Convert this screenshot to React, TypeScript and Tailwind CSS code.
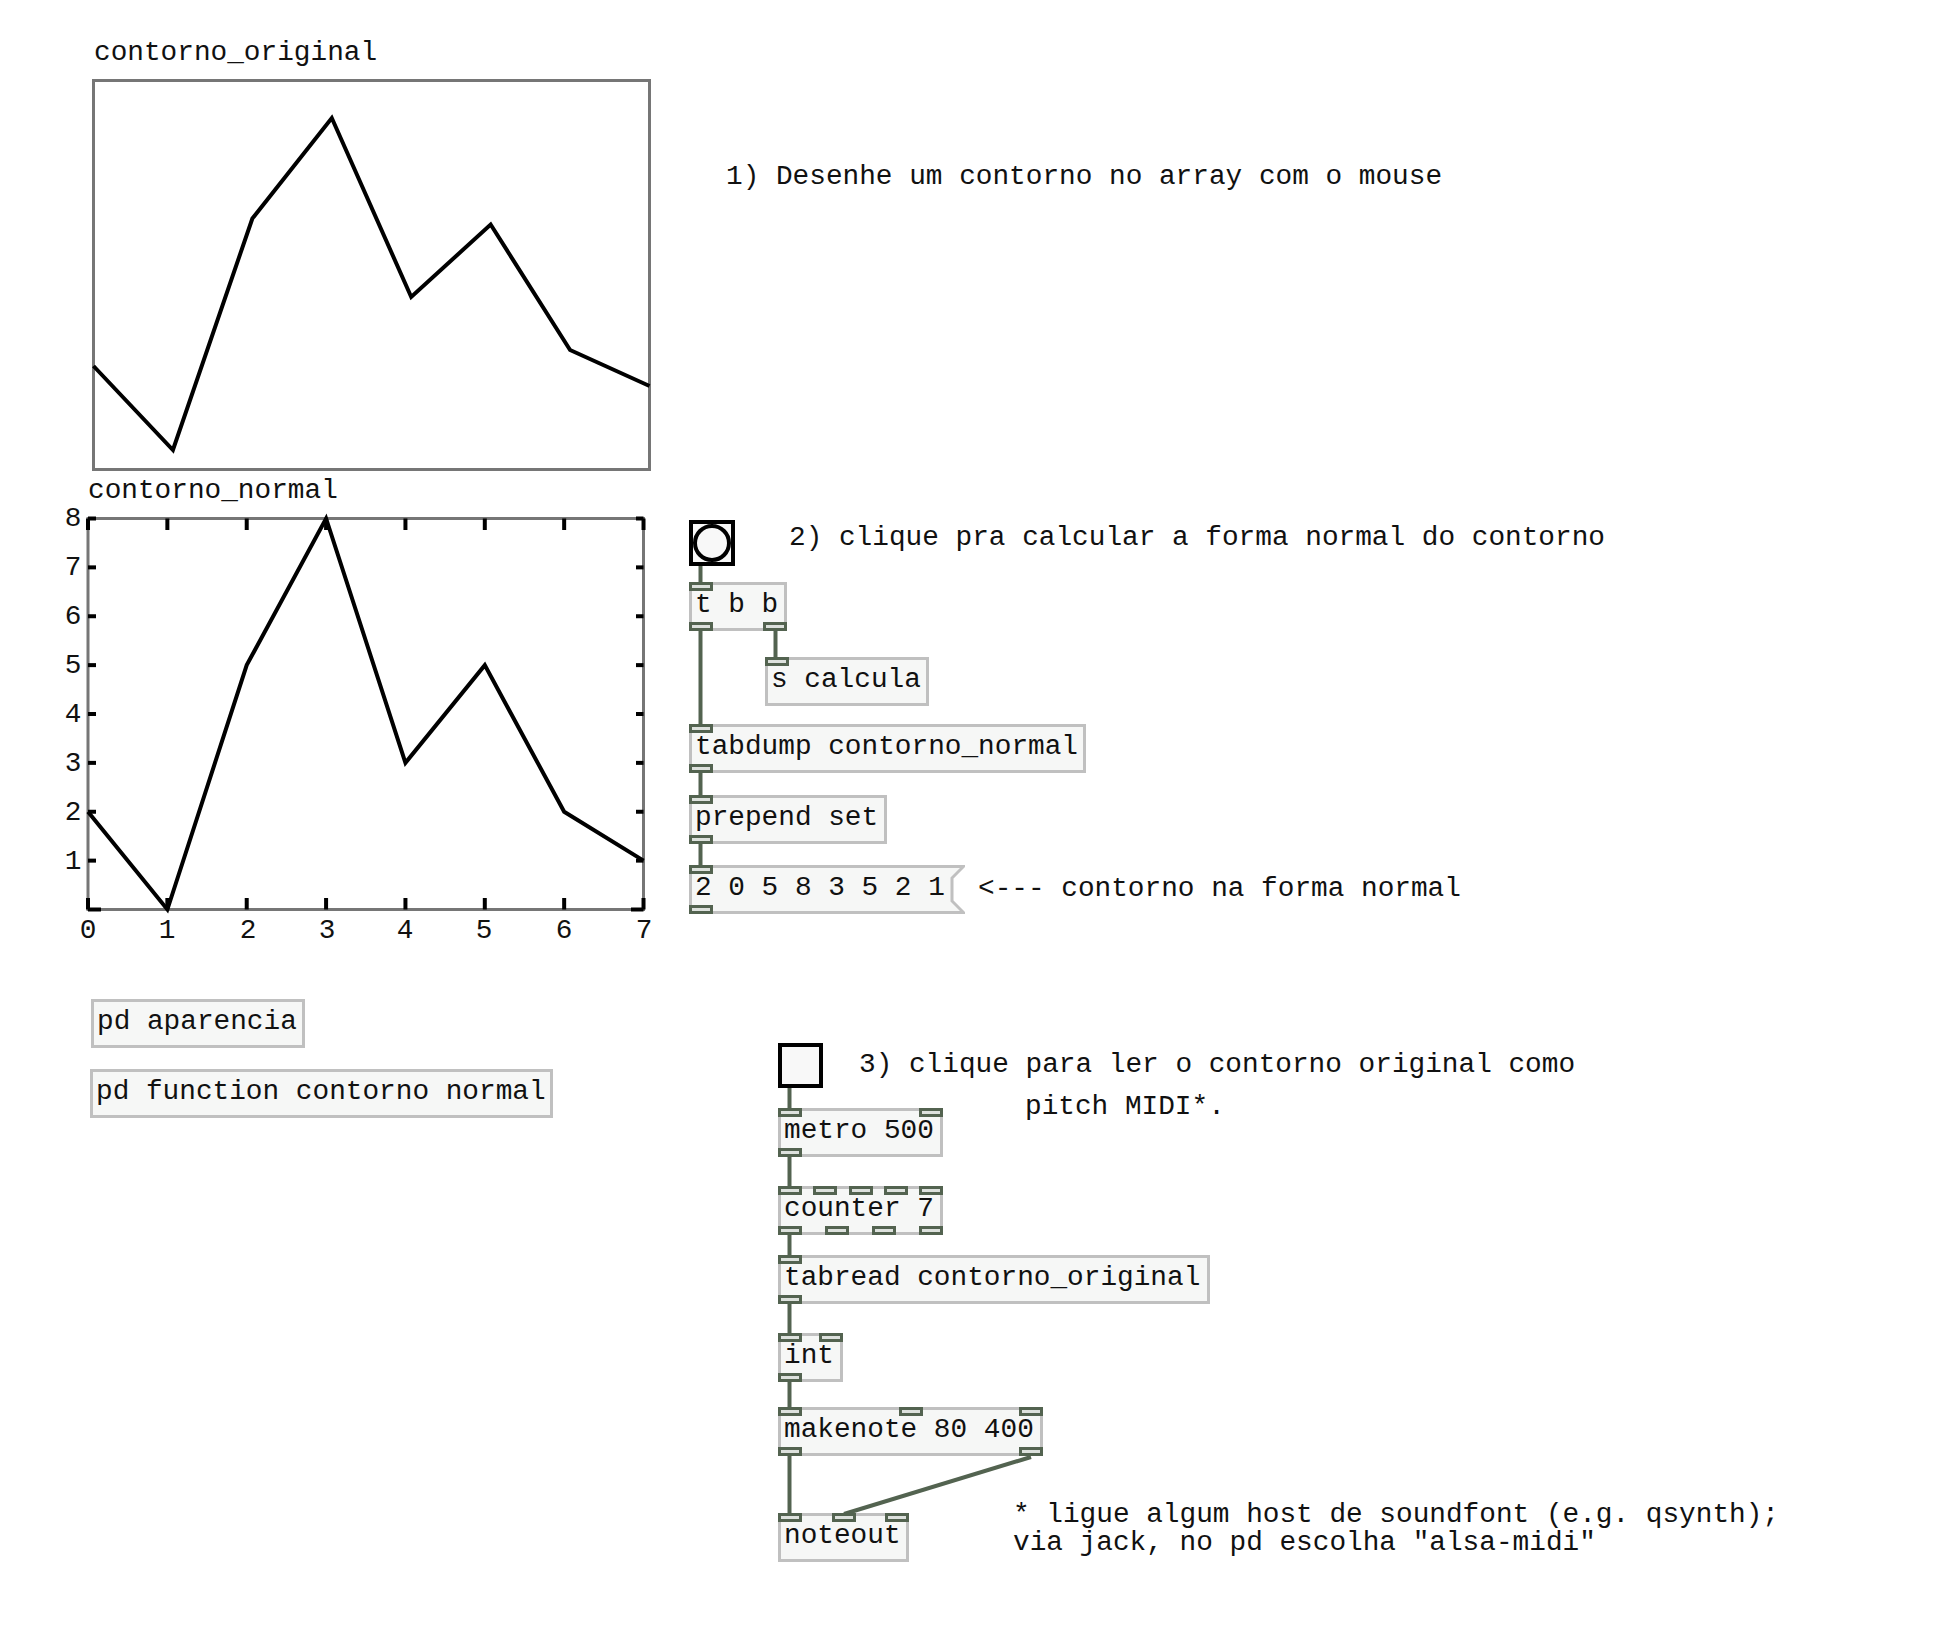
import React from "react";

const WIRE = "#536350";

type Obj = {
  text: string;
  cls: string;
  ins: number;
  outs: number;
};

// nodes of the pd patch, placed on the canvas
const objects: Obj[] = [
  { text: "t b b", cls: "left-[689px] top-[582px] w-[98px]", ins: 1, outs: 2 },
  { text: "s calcula", cls: "left-[765px] top-[657px] w-[164px]", ins: 1, outs: 0 },
  { text: "tabdump contorno_normal", cls: "left-[689px] top-[724px] w-[397px]", ins: 1, outs: 1 },
  { text: "prepend set", cls: "left-[689px] top-[795px] w-[198px]", ins: 1, outs: 1 },
  { text: "pd aparencia", cls: "left-[91px] top-[999px] w-[214px]", ins: 0, outs: 0 },
  { text: "pd function contorno normal", cls: "left-[90px] top-[1069px] w-[463px]", ins: 0, outs: 0 },
  { text: "metro 500", cls: "left-[778px] top-[1108px] w-[165px]", ins: 2, outs: 1 },
  { text: "counter 7", cls: "left-[778px] top-[1186px] w-[165px]", ins: 5, outs: 4 },
  { text: "tabread contorno_original", cls: "left-[778px] top-[1255px] w-[432px]", ins: 1, outs: 1 },
  { text: "int", cls: "left-[778px] top-[1333px] w-[65px]", ins: 2, outs: 1 },
  { text: "makenote 80 400", cls: "left-[778px] top-[1407px] w-[265px]", ins: 3, outs: 2 },
  { text: "noteout", cls: "left-[778px] top-[1513px] w-[131px]", ins: 3, outs: 0 },
];

const wires: [number, number, number, number][] = [
  [700.5, 566, 700.5, 582],
  [700.5, 631, 700.5, 724],
  [775.5, 631, 775.5, 657],
  [700.5, 773, 700.5, 795],
  [700.5, 844, 700.5, 865],
  [789.5, 1088, 789.5, 1108],
  [789.5, 1157, 789.5, 1186],
  [789.5, 1235, 789.5, 1255],
  [789.5, 1304, 789.5, 1333],
  [789.5, 1382, 789.5, 1407],
  [789.5, 1456, 789.5, 1513],
  [1031, 1457, 844, 1514],
];

const original = [366, 450, 218.5, 118, 297, 224.5, 350, 386];
const normal = [2, 0, 5, 8, 3, 5, 2, 1];

const g1x = (i: number) => 93.5 + i * 79.43;
const g2x = (i: number) => 88 + i * 79.36;
const g2y = (v: number) => 909.5 - v * 48.875;

const Port = () => (
  <div className="h-[9px] w-[24px] border-[3px] border-[#536350] bg-[#dde1dd]" />
);

const Ports = ({ n, bottom }: { n: number; bottom?: boolean }) => {
  if (n === 0) return null;
  return (
    <div
      className={`absolute left-[-3px] right-[-3px] flex justify-between ${
        bottom ? "bottom-[-3px]" : "top-[-3px]"
      }`}
    >
      {Array.from({ length: n }).map((_, i) => (
        <Port key={i} />
      ))}
    </div>
  );
};

const Box = ({ o }: { o: Obj }) => (
  <div
    className={`absolute h-[49px] border-[3px] border-[#c0c0c0] bg-[#f6f7f6] ${o.cls}`}
  >
    <Ports n={o.ins} />
    <Ports n={o.outs} bottom />
    <span className="block whitespace-pre pl-[3px] pt-[5.5px] leading-[27.5px]">
      {o.text}
    </span>
  </div>
);

const Message = () => (
  <div className="absolute left-[689px] top-[865px] h-[49px] w-[276px]">
    <svg className="absolute inset-0" width="276" height="49">
      <polygon
        points="1.5,1.5 274.5,1.5 263,13 263,36 274.5,47.5 1.5,47.5"
        fill="#f6f7f6"
        stroke="#c0c0c0"
        strokeWidth="3"
      />
    </svg>
    <div className="absolute left-0 top-0">
      <Port />
    </div>
    <div className="absolute bottom-0 left-0">
      <Port />
    </div>
    <span className="relative block whitespace-pre pl-[6px] pt-[8.5px] leading-[27.5px]">
      2 0 5 8 3 5 2 1
    </span>
  </div>
);

const Comment = ({ cls, children }: { cls: string; children: React.ReactNode }) => (
  <span className={`absolute whitespace-pre leading-[27.5px] ${cls}`}>{children}</span>
);

const yLabels = [
  { v: 8, cls: "top-[505px]" },
  { v: 7, cls: "top-[554px]" },
  { v: 6, cls: "top-[603px]" },
  { v: 5, cls: "top-[652px]" },
  { v: 4, cls: "top-[701px]" },
  { v: 3, cls: "top-[750px]" },
  { v: 2, cls: "top-[799px]" },
  { v: 1, cls: "top-[848px]" },
];

const xLabels = [
  { v: 0, cls: "left-[73px]" },
  { v: 1, cls: "left-[152px]" },
  { v: 2, cls: "left-[233px]" },
  { v: 3, cls: "left-[312px]" },
  { v: 4, cls: "left-[390px]" },
  { v: 5, cls: "left-[469px]" },
  { v: 6, cls: "left-[549px]" },
  { v: 7, cls: "left-[629px]" },
];

export default function App() {
  return (
    <div className="relative h-[1628px] w-[1958px] overflow-hidden bg-white font-['Liberation_Mono',monospace] text-[27.75px] text-[#111]">
      <svg className="absolute left-0 top-0" width="1958" height="1628">
        {/* contorno_original */}
        <rect x="93.5" y="80.5" width="556" height="389" fill="#fff" stroke="#767676" strokeWidth="3" />
        <polyline
          points={original.map((y, i) => `${g1x(i)},${y}`).join(" ")}
          fill="none"
          stroke="#000"
          strokeWidth="4"
        />

        {/* contorno_normal */}
        <rect x="88" y="518.5" width="555.5" height="391" fill="#fff" stroke="#767676" strokeWidth="3" />
        {normal.map((_, i) => (
          <g key={"t" + i} stroke="#000" strokeWidth="4">
            <line x1={g2x(i)} y1={518.5} x2={g2x(i)} y2={530} />
            <line x1={g2x(i)} y1={909.5} x2={g2x(i)} y2={898} />
          </g>
        ))}
        {[0, 1, 2, 3, 4, 5, 6, 7, 8].map((v) => (
          <g key={"v" + v} stroke="#000" strokeWidth="4">
            <line x1={88} y1={g2y(v)} x2={v === 0 ? 101 : 96} y2={g2y(v)} />
            <line x1={643.5} y1={g2y(v)} x2={v === 0 ? 631 : 636} y2={g2y(v)} />
          </g>
        ))}
        <polyline
          points={normal.map((v, i) => `${g2x(i)},${g2y(v)}`).join(" ")}
          fill="none"
          stroke="#000"
          strokeWidth="4"
        />

        {/* patch cords */}
        {wires.map(([x1, y1, x2, y2], i) => (
          <line key={"w" + i} x1={x1} y1={y1} x2={x2} y2={y2} stroke={WIRE} strokeWidth="4" />
        ))}
      </svg>

      <Comment cls="left-[94px] top-[38.5px]">contorno_original</Comment>
      <Comment cls="left-[88px] top-[476.5px]">contorno_normal</Comment>

      {yLabels.map((l) => (
        <span key={l.v} className={`absolute left-[58px] w-[30px] text-center leading-[27.5px] ${l.cls}`}>
          {l.v}
        </span>
      ))}
      {xLabels.map((l) => (
        <span key={l.v} className={`absolute top-[917px] w-[30px] text-center leading-[27.5px] ${l.cls}`}>
          {l.v}
        </span>
      ))}

      <Comment cls="left-[726px] top-[162.5px]">1) Desenhe um contorno no array com o mouse</Comment>
      <Comment cls="left-[789px] top-[523.5px]">2) clique pra calcular a forma normal do contorno</Comment>
      <Comment cls="left-[978px] top-[874.5px]">{"<--- contorno na forma normal"}</Comment>
      <Comment cls="left-[859px] top-[1050.5px]">3) clique para ler o contorno original como</Comment>
      <Comment cls="left-[1025px] top-[1093px]">pitch MIDI*.</Comment>
      <Comment cls="left-[1013px] top-[1501px]">
        {'* ligue algum host de soundfont (e.g. qsynth);\nvia jack, no pd escolha "alsa-midi"'}
      </Comment>

      {/* bang */}
      <div className="absolute left-[689px] top-[520px] flex size-[46px] items-center justify-center border-[4px] border-black bg-[#f8f8f8]">
        <div className="size-[38px] rounded-full border-[4px] border-black bg-[#f8f8f8]" />
      </div>

      {/* toggle */}
      <div className="absolute left-[778px] top-[1043px] size-[45px] border-[4px] border-black bg-[#f8f8f8]" />

      {objects.map((o) => (
        <Box key={o.text} o={o} />
      ))}
      <Message />
    </div>
  );
}
